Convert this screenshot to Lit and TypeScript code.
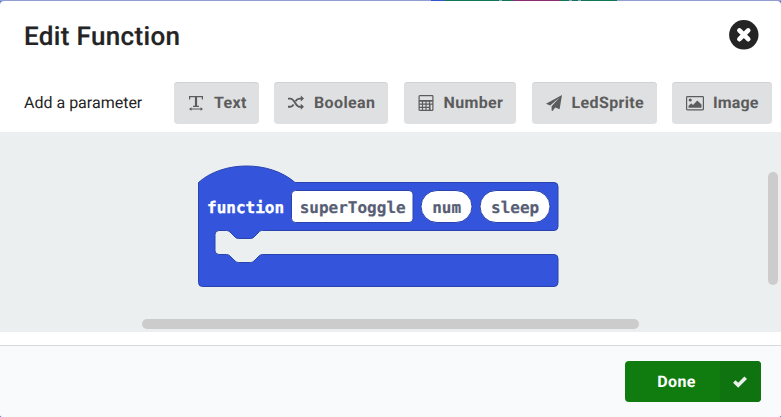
import { LitElement, html, css, svg } from "lit";
import { customElement } from "lit/decorators.js";

const textIcon = svg`<g fill="none" stroke="currentColor" stroke-width="1.2"><path d="M1.600 4.500V1.600H14.400V4.500M5 11.300H11"/><path d="M8 1.700V11" stroke-width="2.200"/><path d="M2 14H14"/></g><path fill="currentColor" d="M1 14l2.500-1.800v3.600zM15 14l-2.500-1.800v3.600z"/>`;
const shuffleIcon = svg`<path fill="none" stroke="currentColor" stroke-width="1.900" d="M0 3.600H2.300C6.800 3.600 7.600 11.800 11.600 11.800H13.500M0 11.800H2.300C3.900 11.800 4.800 10.800 5.600 9.500M7.500 6.300C8.500 4.700 9.500 3.600 11.600 3.600H13.500"/><path fill="currentColor" d="M12.800.6L16 3.600l-3.200 3zM12.800 8.800l3.200 3-3.200 3z"/>`;
const calculatorIcon = svg`<g fill="none" stroke="currentColor"><rect x="1.100" y=".6" width="13.800" height="14.800" rx=".7" stroke-width="1.200"/><path d="M1 5.900H15" stroke-width="1.700"/><path d="M1 9.200H15M1 12.300H11.500M4.500 5.500V15M8 5.500V15M11.500 5.500V15" stroke-width="1.200"/></g><path fill="currentColor" d="M11.500 9.500h1v5.500h-1z"/>`;
const planeIcon = svg`<path fill="currentColor" d="M16 0L13.600 14.200 9.200 12.400 6.600 16 5.600 15.500V11.300L13.700 2.300 4.200 10.400 0 8.700z"/>`;
const imageIcon = svg`<rect x=".6" y="1.600" width="16.800" height="13.200" rx=".8" fill="none" stroke="currentColor" stroke-width="1.200"/><circle cx="4.200" cy="5" r="1.600" fill="currentColor"/><path fill="currentColor" d="M2.500 12.800V10.900L5.200 8.300 7 10 11.300 5.500 15.500 9.600V12.800z"/>`;

const parameters = [
  { label: "Text", icon: textIcon, box: "0 0 16 16", kind: "text" },
  { label: "Boolean", icon: shuffleIcon, box: "0 0 16 16", kind: "boolean" },
  { label: "Number", icon: calculatorIcon, box: "0 0 16 16", kind: "number" },
  { label: "LedSprite", icon: planeIcon, box: "0 0 16 16", kind: "sprite" },
  { label: "Image", icon: imageIcon, box: "0 0 18 16", kind: "image" },
];

@customElement("app-root")
export class AppRoot extends LitElement {
  static styles = css`
    :host { display: block; width: 781px; height: 417px; overflow: hidden; font-family: Roboto, "Liberation Sans", sans-serif; background: #5b76d4; }
    * { box-sizing: border-box; text-rendering: geometricPrecision; }
    .backdrop { display: flex; height: 1px; background: #929ed3; }
    .backdrop i { height: 1px; }
    .lead { width: 431px; }
    .blue { width: 14px; background: #3455cf; }
    .green { background: #107850; }
    .first { width: 54px; }
    .second { width: 11px; }
    .third { width: 9px; }
    .fourth { width: 6px; }
    .fifth { width: 36px; }
    .purple { width: 47px; background: #8c2a72; }
    .gap { width: 3px; }
    .dialog { display: flex; flex-direction: column; height: 416px; background: #fff; border-radius: 4px 4px 3px 3px; overflow: hidden; }
    header { display: flex; justify-content: space-between; align-items: flex-start; height: 81px; padding: 18px 22px 0 24px; }
    h1 { margin: 1px 0 0; font-size: 26px; line-height: 34px; font-weight: 500; letter-spacing: .34px; color: #242424; -webkit-text-stroke: .2px #242424; white-space: nowrap; }
    .close { width: 30px; height: 30px; margin-top: 1px; padding: 0; border: 0; background: none; }
    svg { display: block; }
    .toolbar { display: flex; flex: none; height: 50px; padding-left: 24px; white-space: nowrap; }
    .caption { width: 150px; line-height: 41px; font-size: 16px; color: #242424; }
    .parameter { display: flex; align-items: center; flex: none; height: 42px; margin-right: 15.5px; padding: 0 0 0 14px; border: 0; border-radius: 4px; background: #dfe0e2; box-shadow: inset 0 1px #d0d1d3; color: #5c5c5c; font: 700 16px/20px Roboto, sans-serif; letter-spacing: .37px; }
    .parameter svg { margin: 0 10px 1px 0; flex: none; }
    .text { width: 84.500px; }
    .boolean { width: 114px; }
    .number { width: 112.500px; }
    .sprite { width: 125px; }
    .image { width: 99.500px; margin-right: 0; letter-spacing: .1px; }
    .image svg { margin-right: 9px; }
    .workspace { position: relative; flex: none; height: 200px; background: #ebeff0; }
    .code { font: 700 16px "DejaVu Sans Mono", monospace; }
    .keyword { fill: #fff; stroke: #fff; stroke-width: .3px; }
    .name { fill: #575e75; stroke: #575e75; stroke-width: .2px; }
    .horizontal, .vertical { position: absolute; border-radius: 5px; background: #ccc; }
    .horizontal { left: 142px; bottom: 3.500px; width: 497px; height: 10px; }
    .vertical { right: 3px; top: 40px; width: 10px; height: 113px; }
    footer { display: flex; justify-content: flex-end; flex: 1; margin-top: 13px; padding: 15px 20px 0 0; border-top: 1px solid #d7d8da; background: #f9fafc; }
    .done { display: flex; width: 136px; height: 41px; padding: 0; border: 0; border-radius: 4px; overflow: hidden; background: #107c10; color: #fff; font: 700 16px/41px Roboto, sans-serif; letter-spacing: .4px; }
    .done span { width: 95px; padding-left: 8px; text-align: center; }
    .check { display: flex; align-items: center; justify-content: center; width: 41px; height: 41px; background: #0f730f; }
    .check svg { margin-right: 2px; }
  `;

  render() {
    return html`
      <div class="backdrop"><i class="lead"></i><i class="blue"></i><i class="green first"></i><i class="gap"></i><i class="green second"></i><i class="purple"></i><i class="green third"></i><i class="gap"></i><i class="green fourth"></i><i class="gap"></i><i class="green fifth"></i></div>
      <section class="dialog">
        <header>
          <h1>Edit Function</h1>
          <button class="close" aria-label="Close"><svg width="30" height="30" viewBox="0 0 30 30"><circle cx="14.800" cy="14.800" r="14.700" fill="#242424"/><path d="M10.400 10.400L19.200 19.200M19.200 10.400L10.400 19.200" stroke="#fff" stroke-width="4.700" stroke-linecap="round"/></svg></button>
        </header>
        <div class="toolbar">
          <span class="caption">Add a parameter</span>
          ${parameters.map((p) => html`<button class="parameter ${p.kind}"><svg width=${p.kind === "image" ? 18 : 16} height="16" viewBox=${p.box}>${p.icon}</svg>${p.label}</button>`)}
        </div>
        <div class="workspace">
          <svg width="781" height="200" viewBox="0 0 781 200">
            <path fill="#3455db" stroke="#2a44af" d="M198.500 50.500C223 28.500 270 28.500 295 50.500H554A4 4 0 0 1 558 54.500V94.500A4 4 0 0 1 554 98.500H262.500C260.500 98.500 260 99 259 100L254 105Q252.500 106.500 250.500 106.500H238.500Q236.500 106.500 235 105L230 100Q228.500 98.500 226.500 98.500H219A4 4 0 0 0 215 102.500V118.500A4 4 0 0 0 219 122.500H226.500Q228.500 122.500 230 124L235 129Q236.500 130.500 238.500 130.500H250.500Q252.500 130.500 254 129L259 124Q260.500 122.500 262.500 122.500H554A4 4 0 0 1 558 126.500V150.500A4 4 0 0 1 554 154.500H202.500A4 4 0 0 1 198.500 150.500Z"/>
            <g fill="#fff" stroke="#2a44af"><rect x="291.500" y="58.500" width="121.500" height="32" rx="4"/><rect x="421" y="58.500" width="51" height="32" rx="16"/><rect x="480" y="58.500" width="70" height="32" rx="16"/></g>
            <g class="code"><text class="keyword" x="207" y="80.800">function</text><g class="name"><text x="299.700" y="81">superToggle</text><text x="432.200" y="81">num</text><text x="491" y="81">sleep</text></g></g>
          </svg>
          <div class="vertical"></div><div class="horizontal"></div>
        </div>
        <footer><button class="done"><span>Done</span><i class="check"><svg width="16" height="14" viewBox="0 0 16 14"><path d="M2.300 6.500L6.200 10.300 13.700 2.800" fill="none" stroke="#e8f2e8" stroke-width="3.600"/></svg></i></button></footer>
      </section>
    `;
  }
}
